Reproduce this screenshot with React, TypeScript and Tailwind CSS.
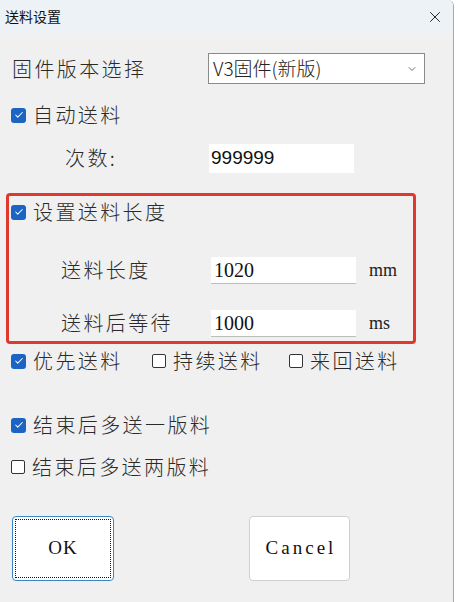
import { X, ChevronDown, Check } from "lucide-react";

const cjk = { fontFamily: '"Noto Sans CJK SC", "Liberation Serif", serif' };
const serif = { fontFamily: '"Liberation Serif", "Noto Sans CJK SC", serif' };

function CheckBox({ checked }: { checked: boolean }) {
  if (checked) {
    return (
      <span className="flex h-[15px] w-[15px] shrink-0 items-center justify-center rounded-[3px] bg-[#1b64c4]">
        <Check size={10} strokeWidth={2.5} color="white" />
      </span>
    );
  }
  return <span className="h-[14px] w-[14px] shrink-0 rounded-[2px] border border-[#333] bg-white" />;
}

function Option({ checked, label, className }: { checked: boolean; label: string; className?: string }) {
  return (
    <div className={"flex h-[30px] items-center gap-[7px] " + (className ?? "")}>
      <CheckBox checked={checked} />
      <span className="text-[20px] font-light tracking-[2.4px] text-[#2a2a2a]" style={cjk}>
        {label}
      </span>
    </div>
  );
}

function Field({ value }: { value: string }) {
  return (
    <div
      className="flex h-[27px] w-[145px] items-center border-b border-[#bdbdbd] bg-white pl-[3px] text-[20px] text-[#111]"
      style={serif}
    >
      {value}
    </div>
  );
}

export default function App() {
  return (
    <div className="flex h-[602px] w-[458px] bg-white">
      <div className="flex h-full w-[454px] flex-col overflow-hidden rounded-tr-[6px] border-r border-[#a8a8a8] bg-[#f0f0f0]">
        {/* title bar */}
        <div className="flex h-[33px] shrink-0 items-center justify-between bg-[#edf2f7] pl-[5px] pr-[9px]">
          <span className="text-[14px] text-[#111]" style={cjk}>
            送料设置
          </span>
          <X size={18} strokeWidth={1.3} color="#222" />
        </div>

        {/* firmware */}
        <div className="mt-[20px] flex items-center">
          <span className="w-[208px] pl-[12px] text-[20px] font-light tracking-[2.4px] text-[#2a2a2a]" style={cjk}>
            固件版本选择
          </span>
          <div className="flex h-[31px] w-[217px] items-center justify-between border border-[#8a8a8a] bg-white pl-[4px] pr-[6px]">
            <span className="text-[19px] font-light text-[#222]" style={cjk}>
              V3固件(新版)
            </span>
            <ChevronDown size={12} strokeWidth={1.5} color="#444" />
          </div>
        </div>

        <Option checked label="自动送料" className="mt-[16px] pl-[11px]" />

        <div className="mt-[13px] flex items-center">
          <span className="w-[209px] pl-[65px] text-[20px] font-light tracking-[2.4px] text-[#2a2a2a]" style={cjk}>
            次数:
          </span>
          <div
            className="flex h-[29px] w-[145px] items-center bg-white pl-[2px] text-[19px] text-[#111]"
            style={{ fontFamily: '"Liberation Sans", sans-serif' }}
          >
            999999
          </div>
        </div>

        {/* highlighted group */}
        <div className="ml-[6px] mt-[20px] flex h-[151px] w-[410px] flex-col rounded-[4px] border-[3px] border-[#e0382c] pl-[2px]">
          <Option checked label="设置送料长度" className="mt-[1px]" />
          <div className="mt-[28px] flex items-center">
            <span className="w-[200px] pl-[50px] text-[20px] font-light tracking-[2.4px] text-[#2a2a2a]" style={cjk}>
              送料长度
            </span>
            <Field value="1020" />
            <span className="ml-[13px] text-[18px] text-[#222]" style={serif}>
              mm
            </span>
          </div>
          <div className="mt-[23px] flex items-center">
            <span className="w-[200px] pl-[50px] text-[20px] font-light tracking-[2.4px] text-[#2a2a2a]" style={cjk}>
              送料后等待
            </span>
            <Field value="1000" />
            <span className="ml-[13px] text-[18px] text-[#222]" style={serif}>
              ms
            </span>
          </div>
        </div>

        <div className="mt-[2px] flex items-center pl-[11px]">
          <Option checked label="优先送料" className="w-[141px]" />
          <Option checked={false} label="持续送料" className="w-[137px]" />
          <Option checked={false} label="来回送料" />
        </div>

        <Option checked label="结束后多送一版料" className="mt-[34px] pl-[11px]" />
        <Option checked={false} label="结束后多送两版料" className="mt-[12px] pl-[11px]" />

        {/* buttons */}
        <div className="mt-[34px] flex items-center pl-[12px]">
          <button className="flex h-[65px] w-[102px] items-center justify-center rounded-[4px] border border-[#3a86c8] bg-white p-[2px]">
            <span
              className="flex h-full w-full items-center justify-center border border-dotted border-[#111] text-[19px] tracking-[1px] text-[#111]"
              style={serif}
            >
              OK
            </span>
          </button>
          <button
            className="ml-[135px] flex h-[65px] w-[101px] items-center justify-center rounded-[4px] border border-[#cfcfcf] bg-white pl-[3px] text-[19px] tracking-[3px] text-[#111]"
            style={serif}
          >
            Cancel
          </button>
        </div>
      </div>
    </div>
  );
}
